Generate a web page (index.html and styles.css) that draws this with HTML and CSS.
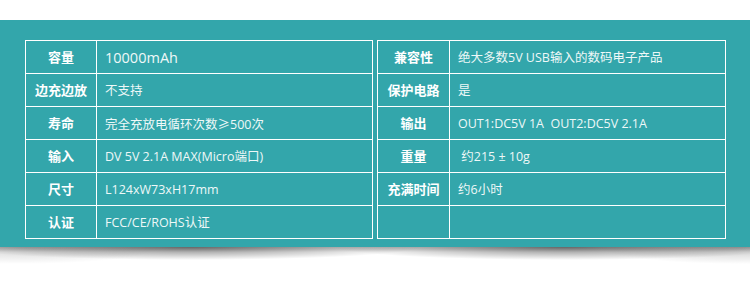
FILE: index.html
```html
<!DOCTYPE html>
<html lang="zh">
<head>
<meta charset="utf-8">
<title>参数</title>
<link rel="stylesheet" href="styles.css">
</head>
<body>
<div class="top-space"></div>
<div class="band">
  <div class="tables">
    <table class="spec">
      <tr><th>容量</th><td class="big">10000mAh</td></tr>
      <tr><th>边充边放</th><td>不支持</td></tr>
      <tr><th>寿命</th><td>完全充放电循环次数<span class="cjk">≥</span>500次</td></tr>
      <tr><th>输入</th><td>DV 5V 2.1A MAX(Micro端口)</td></tr>
      <tr><th>尺寸</th><td>L124xW73xH17mm</td></tr>
      <tr><th>认证</th><td>FCC/CE/ROHS认证</td></tr>
    </table>
    <table class="spec right">
      <tr><th>兼容性</th><td>绝大多数5V USB输入的数码电子产品</td></tr>
      <tr><th>保护电路</th><td>是</td></tr>
      <tr><th>输出</th><td>OUT1:DC5V 1A&nbsp; OUT2:DC5V 2.1A</td></tr>
      <tr><th>重量</th><td>&nbsp;约215 ± 10g</td></tr>
      <tr><th>充满时间</th><td>约6小时</td></tr>
      <tr><th></th><td></td></tr>
    </table>
  </div>
</div>
<div class="shadow"></div>
</body>
</html>
```
FILE: styles.css
```css
html, body {
  margin: 0;
  padding: 0;
  background: #ffffff;
}
body {
  width: 750px;
  height: 283px;
  overflow: hidden;
  font-family: "Open Sans", "Noto Sans CJK SC", sans-serif;
}
.top-space {
  height: 20px;
}
.band {
  background: #33a6ab;
  height: 227px;
  box-sizing: border-box;
  padding: 20px 24px 20px 25px;
}
.tables {
  display: grid;
  grid-template-columns: 348px 349px;
  column-gap: 4px;
}
.spec {
  border-collapse: collapse;
  width: 100%;
  table-layout: fixed;
}
.spec th,
.spec td {
  border: 1px solid #ffffff;
  height: 30px;
  padding: 0;
  color: #ffffff;
  font-size: 13px;
  line-height: 16px;
  vertical-align: middle;
}
.spec th {
  width: 70px;
  text-align: center;
  font-weight: 700;
  font-family: "Noto Sans CJK SC", sans-serif;
}
.spec.right th {
  width: 71px;
}
.spec td {
  text-align: left;
  padding-left: 8px;
  padding-top: 2px;
  color: #eef8f8;
  font-size: 12.5px;
  font-weight: 400;
  white-space: nowrap;
}
.spec td.big {
  font-size: 14.5px;
}
.cjk {
  font-family: "Noto Sans CJK SC", sans-serif;
}
.shadow {
  height: 20px;
  background:
    radial-gradient(ellipse 230px 13px at 190px 0, rgba(0,0,0,0.5), rgba(0,0,0,0) 100%),
    radial-gradient(ellipse 230px 13px at 565px 0, rgba(0,0,0,0.5), rgba(0,0,0,0) 100%),
    radial-gradient(ellipse 140px 17px at 20px 0, rgba(0,0,0,0.18), rgba(0,0,0,0) 100%),
    radial-gradient(ellipse 140px 17px at 740px 0, rgba(0,0,0,0.22), rgba(0,0,0,0) 100%),
    linear-gradient(to bottom, rgba(0,0,0,0.2), rgba(0,0,0,0) 5px);
}
```
